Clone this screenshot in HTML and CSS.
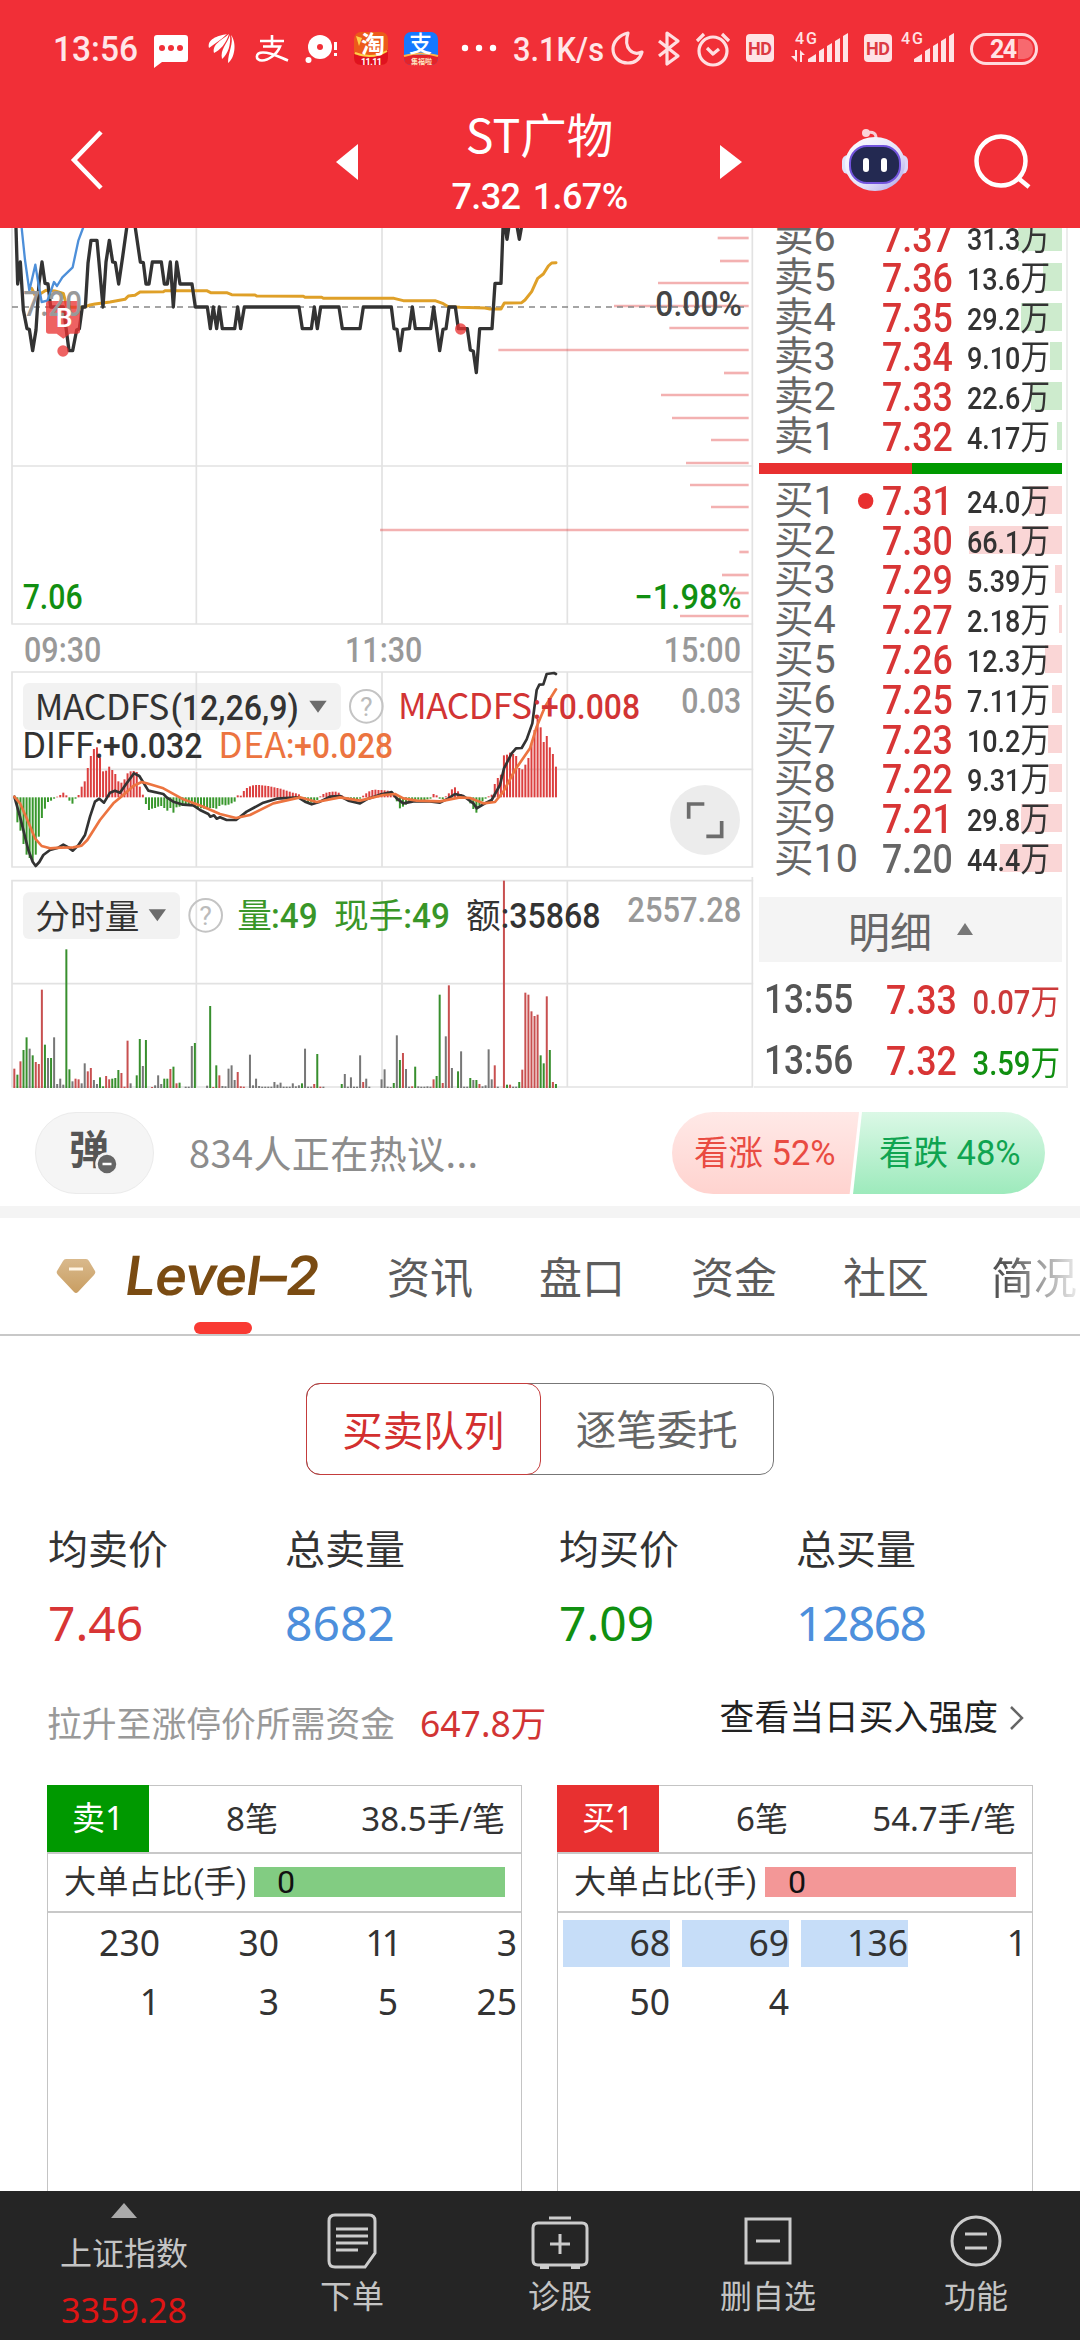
FILE: index.html
```html
<!DOCTYPE html>
<html lang="zh-CN">
<head>
  <meta charset="UTF-8">
  <meta name="viewport" content="width=device-width, initial-scale=1.0">
  <title>ST广物</title>
  <link rel="stylesheet" href="styles.css">
</head>
<body>
  <header class="header">
    <div class="status">
      <svg viewBox="0 0 1080 96" width="1080" height="96">
        <g fill="#ffe6e8" class="status-text">
          <text x="53" y="61" font-size="35" textLength="85" lengthAdjust="spacingAndGlyphs">13:56</text>
          <text x="513" y="61" font-size="34" textLength="91" lengthAdjust="spacingAndGlyphs">3.1K/s</text>
        </g>
        <path d="M157 35h28q3 0 3 3v21q0 3-3 3h-23l-8 6V38q0-3 3-3z" fill="#fff"/>
        <g fill="#f12f37"><circle cx="162" cy="48" r="3"/><circle cx="171" cy="48" r="3"/><circle cx="180" cy="48" r="3"/></g>
        <g fill="#fff">
          <path d="M227 34c-10 2-20 5-18 14 5-4 12-8 18-14z"/>
          <path d="M229 34c-7 6-17 10-15 19 6-3 12-9 15-19z"/>
          <path d="M230 35c-3 9-10 14-8 24 6-5 9-14 8-24z"/>
          <path d="M231 35c3 8-3 17-3 28 7-5 9-20 3-28z"/>
          <circle cx="320" cy="47" r="12"/><circle cx="308.500" cy="60" r="3"/>
          <path d="M334 42h3v8h-3zM334 53h3v3h-3z"/>
          <circle cx="465" cy="48" r="3.200"/><circle cx="479" cy="48" r="3.200"/><circle cx="493" cy="48" r="3.200"/>
        </g>
        <circle cx="320" cy="47" r="3" fill="#f12f37"/>
        <path d="M260 41h24M272 35v11M263 46.500h17c-3 8-12 14-18 14-7 0-7-8 1-8 9 0 17 5 25 8" fill="none" stroke="#fff" stroke-width="2.600"/>
        <rect x="354" y="32" width="34" height="33" rx="7" fill="#ec5a1a"/>
        <path d="M354 54q18 8 34-4v8q0 7-7 7h-20q-7 0-7-7z" fill="#e0121f"/>
        <path d="M355 53q17 7 32-2" stroke="#ffd04a" stroke-width="2" fill="none"/>
        <path d="M356 36l6 2-3 8z" fill="#ffd04a"/>
        <text x="361" y="53" font-size="24" font-weight="700" fill="#fff" class="cn">淘</text>
        <text x="361" y="65" font-size="9" font-weight="700" fill="#fff" textLength="21">11.11</text>
        <rect x="404" y="32" width="34" height="33" rx="7" fill="#1678ff"/>
        <path d="M404 55h34v3q0 7-7 7h-20q-7 0-7-7z" fill="#e3232a"/>
        <path d="M404 56q17-5 34 0" stroke="#ffb347" stroke-width="2" fill="none"/>
        <text x="409" y="52" font-size="23" font-weight="500" fill="#fff" class="cn">支</text>
        <text x="411" y="64" font-size="7" font-weight="700" fill="#ffe3c0" class="cn">集福啦</text>
        <g fill="none" stroke="#ffdfe1" stroke-width="3.200" stroke-linejoin="round">
          <path d="M628 33c-9 2-15 9-15 16 0 8 6 14 15 14 7 0 12-4 14-11-9 4-19-3-14-19z"/>
          <path d="M659 41l19 15-11 8V33l11 8-19 15"/>
          <circle cx="713" cy="51" r="14"/><path d="M707 48l6 6 6-5M697 41l7-7M729 41l-7-7"/>
        </g>
        <g fill="#ffe3e5">
          <rect x="746" y="34" width="28" height="28" rx="4"/>
          <rect x="864" y="34" width="28" height="28" rx="4"/>
          <path d="M808 62v-3l8-5v8zM819 51l5-3v14h-5zM827 46l5-3v19h-5zM835 41l5-3v24h-5zM843 36l5-3v29h-5z"/>
          <path d="M914 62v-3l8-5v8zM925 51l5-3v14h-5zM933 46l5-3v19h-5zM941 41l5-3v24h-5zM949 36l5-3v29h-5z"/>
          <path d="M795 50h2v12l-6-6h4zM800 62V50l5 5h-3v7z"/>
        </g>
        <g fill="#dc3a42" font-weight="700" font-size="18">
          <text x="748" y="55" textLength="24">HD</text><text x="866" y="55" textLength="24">HD</text>
        </g>
        <g fill="#ffe3e5" class="status-text" font-size="16">
          <text x="795" y="43.500" textLength="22">4G</text><text x="901" y="43.500" textLength="22">4G</text>
        </g>
        <rect x="971.500" y="34.500" width="65" height="29" rx="14.500" fill="none" stroke="#ffd9dc" stroke-width="3"/>
        <path d="M1018 39h6q9 1 9 10t-9 10h-6z" fill="#f7696f"/>
        <text x="990" y="58" font-size="25" font-weight="700" fill="#ffe3e5" textLength="27">24</text>
      </svg>
    </div>
    <div class="nav">
      <svg class="nav-back" viewBox="0 0 34 62" width="34" height="62"><path d="M31 3L4 31l27 28" fill="none" stroke="#fff" stroke-width="4.500"/></svg>
      <svg class="nav-prev" viewBox="0 0 22 36" width="22" height="36"><path d="M22 0v36L0 18z" fill="#fff"/></svg>
      <div class="nav-title">
        <div class="stock-name">ST广物</div>
        <div class="stock-price">7.32 1.67%</div>
      </div>
      <svg class="nav-next" viewBox="0 0 22 34" width="22" height="34"><path d="M0 0v34l22-17z" fill="#fff"/></svg>
      <svg class="nav-robot" viewBox="0 0 66 64" width="66" height="64">
        <defs>
          <linearGradient id="shell" x1="0" y1="0" x2="1" y2="1"><stop offset="0" stop-color="#fff"/><stop offset=".6" stop-color="#e4e2f8"/><stop offset="1" stop-color="#a9a0e8"/></linearGradient>
        </defs>
        <path d="M24 6q11-3 10 7" fill="none" stroke="#f7cfd8" stroke-width="3"/><circle cx="24" cy="6" r="4" fill="#fbd5da"/>
        <rect x="0" y="28" width="12" height="19" rx="6" fill="#dfe4fb"/><rect x="54" y="28" width="12" height="19" rx="6" fill="#dcd6f8"/>
        <ellipse cx="33" cy="37" rx="30" ry="27" fill="url(#shell)"/>
        <rect x="8" y="19" width="50" height="37" rx="17" fill="#232951" stroke="#7254dc" stroke-width="2"/>
        <rect x="21" y="31" width="6" height="14" rx="3" fill="#fff"/><rect x="39" y="31" width="6" height="14" rx="3" fill="#fff"/>
      </svg>
      <svg class="nav-search" viewBox="0 0 58 58" width="58" height="58"><circle cx="28" cy="28" r="24.500" fill="none" stroke="#fff" stroke-width="4.500"/><path d="M45 45l11 9" stroke="#fff" stroke-width="4.500"/></svg>
    </div>
  </header>

  <section class="quote">
    <div class="charts">
      <!-- price line, viewBox is in 1/3 px units -->
      <svg class="price-chart" viewBox="0 24 2262 1317">
        <g class="grid">
          <path d="M36 24v1189M34 738h2226M34 1212h2226M589 24v1189M1146 24v1189M1702 24v1189M2257 24v1317"/>
        </g>
        <g id="levels" class="levels"></g>
        <path class="base" d="M36 261H2246"/>
        <polyline class="avg" points="95,205 105,225 120,222 138,211 165,213 190,220 200,258 215,262 250,262 270,255 285,252 330,246 375,238 385,228 405,226 420,216 490,215 495,212 620,212 632,218 680,218 695,224 765,225 770,228 910,229 915,232 965,232 970,235 1182,235 1210,242 1305,242 1330,251 1345,260 1380,262 1455,264 1470,267 1503,267 1513,249 1565,248 1575,240 1595,215 1613,175 1630,162 1645,138 1655,129 1668,128"/>
        <g class="price">
          <polyline points="48,24 53,192 61,126 70,270 81,326 88,328 98,392 108,330 117,190 126,126 135,190 144,192 152,261 190,261 207,392 218,392 230,330 238,326 247,261 256,261 264,130 273,61 291,61 309,261 318,126 328,61 338,126 346,128 356,192 368,110 380,24"/>
          <polyline points="406,24 421,126 430,128 438,192 447,192 457,126 484,126 493,192 502,192 511,126 520,261 530,126 540,192 576,192 586,261 622,261 631,326 640,261 650,326 658,261 667,326 704,326 713,261 722,326 733,261 897,261 907,326 934,326 943,261 952,326 962,261 1017,261 1027,326 1080,326 1090,261 1174,261 1182,326 1191,328 1200,392 1209,328 1228,326 1237,261 1246,326 1292,326 1301,261 1310,326 1319,392 1329,328 1338,326 1347,261 1366,261 1375,326 1402,326 1411,390 1420,394 1429,458 1439,326 1476,326 1485,190 1503,190 1509,24 1516,24 1521,58 1526,24"/>
          <polyline points="1552,24 1558,58 1564,24"/>
        </g>
        <polyline class="index" points="65,24 75,120 88,212 106,134 115,190 125,246 142,242 152,215 162,186 171,198 187,172 218,142 235,62 249,24"/>
        <path class="mark" d="M146 243h86q8 0 8 8v82q0 8-8 8h-22l-20 15-20-15h-24q-8 0-8-8v-82q0-8 8-8z"/>
        <circle class="mark" cx="189" cy="393" r="17"/><circle class="mark" cx="1382" cy="327" r="17"/>
        <g class="num" font-size="104">
          <text x="70" y="288" fill="#999" textLength="176" lengthAdjust="spacingAndGlyphs">7.20</text>
          <text x="1966" y="288" fill="#444" textLength="260" lengthAdjust="spacingAndGlyphs">0.00%</text>
          <text x="68" y="1167" fill="#118f11" textLength="180" lengthAdjust="spacingAndGlyphs">7.06</text>
          <text x="1903" y="1167" fill="#118f11" textLength="322" lengthAdjust="spacingAndGlyphs">−1.98%</text>
          <g fill="#999">
            <text x="72" y="1325" textLength="232" lengthAdjust="spacingAndGlyphs">09:30</text>
            <text x="1035" y="1325" textLength="232" lengthAdjust="spacingAndGlyphs">11:30</text>
            <text x="1991" y="1325" textLength="232" lengthAdjust="spacingAndGlyphs">15:00</text>
          </g>
        </g>
        <text x="167" y="320" font-size="80" fill="#fff" font-weight="500">B</text>
      </svg>

      <svg class="macd-chart" viewBox="0 21 2262 630">
        <rect class="chip" x="69" y="69" width="954" height="141" rx="18"/>
        <g class="grid">
          <path d="M36 34v588M34 36h2226M34 328h2226M34 621h2226M589 34v588M1146 34v588M1702 34v588M2257 21v601"/>
        </g>
        <g id="macdBars"></g>
        <polyline class="diff" points="43,410 60,470 85,570 98,605 107,618 118,606 130,585 150,570 175,563 190,554 205,562 218,572 235,556 255,525 270,470 285,425 298,416 312,428 330,398 345,392 360,398 380,370 402,340 418,348 445,392 490,402 500,412 520,425 550,434 580,436 600,450 625,462 631,470 642,466 650,476 660,472 680,480 708,480 740,455 790,428 830,416 895,412 915,425 935,433 960,425 990,410 1020,408 1045,422 1080,430 1100,418 1140,404 1175,396 1190,415 1210,430 1240,424 1290,424 1320,428 1345,415 1365,402 1390,408 1420,430 1430,445 1460,427 1475,420 1500,375 1512,325 1535,280 1548,265 1565,264 1580,238 1597,190 1610,90 1618,74 1630,73 1640,42 1662,39 1668,42"/>
        <polyline class="dea" points="43,410 60,430 80,475 105,535 125,558 150,565 180,563 220,562 245,557 262,540 300,480 340,430 370,405 400,378 425,366 440,370 490,385 550,418 610,440 660,462 708,474 750,465 820,430 900,412 950,426 1020,412 1080,422 1150,405 1185,402 1210,415 1250,422 1320,424 1380,412 1410,414 1450,430 1485,426 1510,395 1545,330 1590,265 1610,200 1635,140 1668,88"/>
        <path class="arrow" d="M928 122h52l-26 36z"/>
        <circle class="help" cx="1099" cy="139" r="49"/><text class="help-mark" x="1099" y="168">?</text>
        <g class="cn" font-size="106">
          <text x="104" y="181" fill="#333" textLength="404">MACDFS</text>
          <text x="1194" y="178" fill="#d23434" textLength="402">MACDFS</text>
          <text x="65" y="293" fill="#333" textLength="218">DIFF</text>
          <text x="655" y="293" fill="#ec7440" textLength="203">DEA</text>
        </g>
        <g class="num" font-size="104">
          <text x="512" y="179" fill="#333" textLength="384" lengthAdjust="spacingAndGlyphs">(12,26,9)</text>
          <text x="1598" y="178" fill="#d23434" textLength="322" lengthAdjust="spacingAndGlyphs">:+0.008</text>
          <text x="284" y="293" fill="#333" textLength="323" lengthAdjust="spacingAndGlyphs">:+0.032</text>
          <text x="858" y="293" fill="#ec7440" textLength="321" lengthAdjust="spacingAndGlyphs">:+0.028</text>
          <text x="2044" y="158" fill="#999" textLength="180" lengthAdjust="spacingAndGlyphs">0.03</text>
        </g>
        <circle cx="2115" cy="480" r="105" fill="#ececec"/>
        <path d="M2066 476v-44h47M2119 529h46v-46" fill="none" stroke="#6c6c6c" stroke-width="11"/>
      </svg>

      <svg class="vol-chart" viewBox="0 651 2262 636">
        <rect class="chip" x="69" y="697" width="471" height="140" rx="18"/>
        <g class="grid">
          <path d="M36 660v622M34 662h2226M34 971h2226M34 1281h2226M589 660v622M1146 660v622M1702 660v622M2257 651v631"/>
        </g>
        <g id="volBars"></g>
        <path class="arrow" d="M446 748h52l-26 36z"/>
        <circle class="help" cx="617" cy="766" r="49"/><text class="help-mark" x="617" y="795">?</text>
        <g class="cn" font-size="104">
          <text x="106" y="806" fill="#333">分时量</text>
          <text x="712" y="804" fill="#399628">量</text>
          <text x="1002" y="804" fill="#399628">现手</text>
          <text x="1398" y="804" fill="#333">额</text>
        </g>
        <g class="num" font-size="104">
          <text x="813" y="803" fill="#399628" textLength="140" lengthAdjust="spacingAndGlyphs">:49</text>
          <text x="1210" y="803" fill="#399628" textLength="140" lengthAdjust="spacingAndGlyphs">:49</text>
          <text x="1502" y="803" fill="#333" textLength="300" lengthAdjust="spacingAndGlyphs">:35868</text>
          <text x="1882" y="786" fill="#999" textLength="342" lengthAdjust="spacingAndGlyphs">2557.28</text>
        </g>
      </svg>
    </div>

    <aside class="book">
      <div class="book-rows sell" id="sellRows"></div>
      <div class="ratio"><span class="ratio-buy"></span><span class="ratio-sell"></span></div>
      <div class="book-rows buy" id="buyRows"></div>
      <div class="detail-title">明细<svg viewBox="0 0 16 12" width="16" height="12"><path d="M8 0l8 12H0z" fill="#777"/></svg></div>
      <div class="trade"><span class="t-time">13:55</span><span class="t-price">7.33</span><span class="t-vol">0.07<i>万</i></span></div>
      <div class="trade"><span class="t-time">13:56</span><span class="t-price">7.32</span><span class="t-vol down">3.59<i>万</i></span></div>
    </aside>
  </section>

  <section class="discuss">
    <div class="danmu">弹<svg viewBox="0 0 24 24" width="24" height="24"><circle cx="12" cy="12" r="10.500" fill="#666" stroke="#f4f4f4" stroke-width="2.500"/><path d="M7.500 12h9" stroke="#fff" stroke-width="2.500"/></svg></div>
    <div class="talking">834人正在热议...</div>
    <div class="vote">
      <div class="vote-up">看涨 52%</div>
      <div class="vote-down">看跌 48%</div>
    </div>
  </section>

  <nav class="tabs">
    <svg class="gem" viewBox="0 0 40 36" width="40" height="36">
      <defs><linearGradient id="gold" x1="0" y1="0" x2="0" y2="1"><stop offset="0" stop-color="#d9b98c"/><stop offset="1" stop-color="#c99e62"/></linearGradient></defs>
      <path d="M10 1h20q2 0 3 2l6 10q1 2-1 4L22 34q-2 2-4 0L2 17q-2-2-1-4L7 3q1-2 3-2z" fill="url(#gold)"/><path d="M13 11h14" stroke="#fff5e4" stroke-width="3"/>
    </svg>
    <div class="tab-level"><span>Level–2</span></div>
    <div class="tab">资讯</div>
    <div class="tab">盘口</div>
    <div class="tab">资金</div>
    <div class="tab">社区</div>
    <div class="tab last">简况</div>
  </nav>

  <main class="level2">
    <div class="segment">
      <div class="seg active">买卖队列</div>
      <div class="seg">逐笔委托</div>
    </div>

    <div class="stats">
      <div><div class="label">均卖价</div><div class="value red">7.46</div></div>
      <div><div class="label">总卖量</div><div class="value blue">8682</div></div>
      <div><div class="label">均买价</div><div class="value green">7.09</div></div>
      <div><div class="label">总买量</div><div class="value blue long">12868</div></div>
    </div>

    <div class="fund">
      <div class="fund-left">拉升至涨停价所需资金<b>647.8万</b></div>
      <div class="fund-more">查看当日买入强度<svg viewBox="0 0 16 26" width="16" height="26"><path d="M2 2l11 11L2 24" fill="none" stroke="#666" stroke-width="2.500"/></svg></div>
    </div>

    <div class="queues">
      <div class="queue">
        <div class="queue-head"><span class="tag tag-sell">卖1</span><span class="count">8笔</span><span class="per">38.5手/笔</span></div>
        <div class="queue-big">大单占比(手)<span class="big-bar bar-sell">0</span></div>
        <div class="queue-grid">
          <span>230</span><span>30</span><span class="ones">11</span><span>3</span>
          <span>1</span><span>3</span><span>5</span><span>25</span>
        </div>
      </div>
      <div class="queue">
        <div class="queue-head"><span class="tag tag-buy">买1</span><span class="count">6笔</span><span class="per">54.7手/笔</span></div>
        <div class="queue-big">大单占比(手)<span class="big-bar bar-buy">0</span></div>
        <div class="queue-grid">
          <span class="hl">68</span><span class="hl">69</span><span class="hl">136</span><span>1</span>
          <span>50</span><span>4</span>
        </div>
      </div>
    </div>
  </main>

  <footer class="toolbar">
    <div class="index-item">
      <svg viewBox="0 0 26 15" width="26" height="15"><path d="M13 0l13 15H0z" fill="#aaa"/></svg>
      <div class="index-name">上证指数</div>
      <div class="index-value">3359.28</div>
    </div>
    <div class="tool">
      <svg viewBox="0 0 60 60" width="60" height="60"><path d="M13 5h34q6 0 6 6v32L43 57H13q-6 0-6-6V11q0-6 6-6zM14 19h32M14 26h32M14 33h32M14 40h22"/></svg>
      <div>下单</div>
    </div>
    <div class="tool">
      <svg viewBox="0 0 60 60" width="60" height="60"><path d="M19 8h22M8 13h44q5 0 5 5v32q0 5-5 5H8q-5 0-5-5V18q0-5 5-5zM20 34h20M30 24v20M10 57.500h9M41 57.500h9"/></svg>
      <div>诊股</div>
    </div>
    <div class="tool">
      <svg viewBox="0 0 60 60" width="60" height="60"><path d="M8 9h44v44H8zM18 31h24"/></svg>
      <div>删自选</div>
    </div>
    <div class="tool">
      <svg viewBox="0 0 60 60" width="60" height="60"><path d="M19 24h22M19 38h22"/><circle cx="30" cy="31" r="24"/></svg>
      <div>功能</div>
    </div>
  </footer>
  <script src="app.js"></script>
</body>
</html>
```
FILE: styles.css
```css
* {
  margin: 0;
  padding: 0;
  box-sizing: border-box;
}

body {
  width: 1080px;
  height: 2340px;
  overflow: hidden;
  display: flex;
  flex-direction: column;
  background-color: #fff;
  color: #333;
  font-family: Roboto, "Noto Sans CJK SC", sans-serif;
}

svg {
  display: block;
  flex-shrink: 0;
  overflow: visible;
}

svg text {
  font-family: Roboto, "Noto Sans CJK SC", sans-serif;
}

svg .cn,
svg .cn text {
  font-family: "Noto Sans CJK SC", sans-serif;
}

.status-text,
.num {
  font-weight: 500;
}

/* header */
.header {
  height: 228px;
  background-color: #f12f37;
  color: #fff;
}

.status {
  height: 96px;
}

.nav {
  display: flex;
  align-items: flex-start;
  height: 132px;
}

.nav-back {
  margin: 33px 0 0 70px;
}

.nav-prev {
  margin: 48px 0 0 232px;
}

.nav-title {
  width: 362px;
  padding-left: 1px;
  text-align: center;
}

.stock-name {
  margin-top: 9px;
  font-size: 46.5px;
  line-height: 56px;
  font-family: "Noto Sans CJK SC", sans-serif;
}

.stock-price {
  margin-top: 16px;
  font-size: 36px;
  line-height: 40px;
  font-weight: 500;
  letter-spacing: -0.6px;
  word-spacing: 4px;
}

.nav-next {
  margin-top: 49px;
}

.nav-robot {
  margin: 31px 0 0 100px;
}

.nav-search {
  margin: 37px 0 0 65px;
}

/* charts and order book */
.quote {
  display: flex;
  height: 860px;
  overflow: hidden;
}

.charts {
  width: 754px;
}

.price-chart {
  width: 754px;
  height: 439px;
}

.macd-chart {
  width: 754px;
  height: 210px;
}

.vol-chart {
  width: 754px;
  height: 212px;
}

.grid {
  fill: none;
  stroke: #e2e2e2;
  stroke-width: 5;
}

.levels {
  stroke: #e23b3b;
  stroke-opacity: 0.4;
  stroke-width: 8;
}

.base {
  stroke: #888;
  stroke-width: 4;
  stroke-dasharray: 18 15;
}

.price,
.avg,
.index,
.diff,
.dea {
  fill: none;
  stroke: #333;
  stroke-width: 10;
  stroke-linejoin: round;
  stroke-linecap: round;
}

.avg {
  stroke: #dfa028;
  stroke-width: 9;
}

.index {
  stroke: #4d8fd9;
  stroke-width: 7;
}

.diff {
  stroke-width: 8;
}

.dea {
  stroke: #ec7440;
  stroke-width: 8;
}

.mark {
  fill: #e83030;
  fill-opacity: 0.76;
}

.chip {
  fill: #f2f2f2;
}

.arrow {
  fill: #6c6c6c;
}

.help {
  fill: none;
  stroke: #c4c4c4;
  stroke-width: 6;
}

.help-mark {
  fill: #bbb;
  font-size: 80px;
  text-anchor: middle;
}

.vr { fill: #c85050; }
.vg { fill: #388f2e; }
.vk { fill: #777; }
.mr { fill: #dc3f3f; }
.mg { fill: #38972c; }

.book {
  width: 314px;
  height: 860px;
  border-right: 2px solid #ececec;
  border-bottom: 2px solid #ececec;
  padding: 0 4px 0 5px;
}

.sell {
  margin-top: -11px;
}

.book-row {
  position: relative;
  display: flex;
  height: 39.8px;
  line-height: 41.8px;
  padding-left: 15px;
}

.depth {
  position: absolute;
  right: 0;
  top: 6px;
  height: 28px;
}

.sell .depth { background-color: #cdebcd; }
.buy .depth { background-color: #fad6d6; }

.book-row span {
  position: relative;
}

.name {
  flex: none;
  width: 108px;
  font-size: 39.5px;
  color: #666;
  white-space: nowrap;
}

.name em {
  font-style: normal;
}

.cost,
.t-price {
  flex: none;
  width: 70px;
  font-size: 41.5px;
  font-weight: 500;
  color: #d83535;
  transform: scaleX(0.86);
  transform-origin: left;
}

.cost.flat {
  color: #666;
}

.amount,
.t-vol {
  flex: 1;
  text-align: right;
  font-size: 31px;
  font-weight: 500;
  white-space: nowrap;
  transform: scaleX(0.87);
  transform-origin: right;
}

.amount {
  top: 1px;
  margin-right: 12px;
}

.amount i,
.t-vol i {
  font-style: normal;
  font-weight: 400;
  font-size: 34px;
}

.hot::before {
  content: "";
  position: absolute;
  left: -28px;
  top: 13px;
  width: 18px;
  height: 16px;
  border-radius: 50%;
  background-color: #e83030;
}

.ratio {
  display: flex;
  height: 11px;
  margin: 7px 0 6px;
}

.ratio-buy {
  width: 153px;
  background-color: #e83030;
}

.ratio-sell {
  flex: 1;
  background-color: #009900;
}

.detail-title {
  display: flex;
  align-items: center;
  justify-content: center;
  gap: 25px;
  height: 65px;
  margin: 19px 0 7px;
  background-color: #f4f4f4;
  color: #666;
  font-size: 42px;
}

.trade {
  display: flex;
  height: 61px;
  line-height: 62px;
  padding-left: 5px;
}

.t-time {
  flex: none;
  width: 122px;
  font-size: 40px;
  font-weight: 500;
  color: #555;
  transform: scaleX(0.88);
  transform-origin: left;
}

.t-vol {
  color: #cc3a3a;
  margin-right: 2px;
  font-size: 33.5px;
  line-height: 66px;
}

.t-vol.down {
  color: #118f11;
}

/* discussion bar */
.discuss {
  display: flex;
  align-items: center;
  height: 130px;
  padding: 0 35px;
  border-bottom: 12px solid #f4f4f4;
}

.danmu {
  position: relative;
  width: 119px;
  height: 82px;
  margin-top: 12px;
  padding-left: 33px;
  line-height: 76px;
  border: 1px solid #ebebeb;
  border-radius: 41px;
  background-color: #f5f5f5;
  color: #555;
  font-size: 40px;
  font-weight: 700;
}

.danmu svg {
  position: absolute;
  left: 59px;
  top: 39px;
}

.talking {
  margin: 8px 0 0 35px;
  color: #8c8c8c;
  font-size: 38px;
  letter-spacing: 0.4px;
  font-family: "Noto Sans CJK SC", sans-serif;
}

.vote {
  display: flex;
  width: 373px;
  height: 82px;
  margin: 12px 0 0 auto;
  border-radius: 41px;
  overflow: hidden;
  line-height: 83px;
  font-size: 34.5px;
}

.vote-up {
  width: 190px;
  padding-left: 22px;
  background: linear-gradient(#ffe9e7, #ffd3cf);
  clip-path: polygon(0 0, 100% 0, 95% 100%, 0 100%);
  color: #e94b42;
}

.vote-down {
  width: 195px;
  margin-left: -6px;
  padding-left: 26px;
  background: linear-gradient(#dbf8e6, #9deabc);
  clip-path: polygon(9px 0, 100% 0, 100% 100%, 0 100%);
  color: #10a451;
}

/* tabs */
.tabs {
  position: relative;
  display: flex;
  align-items: center;
  height: 118px;
  border-bottom: 2px solid #c8c8c8;
  overflow: hidden;
}

.gem {
  margin: 0 0 0 56px;
}

.tab-level {
  position: relative;
  flex-shrink: 0;
  width: 261px;
  height: 116px;
  margin-left: 30px;
  line-height: 116px;
  color: #7a4b12;
}

.tab-level span {
  display: inline-block;
  font-family: Inter, sans-serif;
  font-size: 54px;
  font-weight: 600;
  letter-spacing: -0.8px;
  transform: skewX(-8deg);
}

.tab-level::after {
  content: "";
  position: absolute;
  left: 68px;
  bottom: 0;
  width: 58px;
  height: 12px;
  border-radius: 6px;
  background-color: #f93a33;
}

.tab {
  flex-shrink: 0;
  width: 152px;
  font-size: 43px;
  line-height: 116px;
  padding-top: 5px;
  color: #5c5c5c;
}

.last {
  margin-left: -4px;
  background: linear-gradient(90deg, #555 15px, #eee 88px);
  background-clip: text;
  -webkit-background-clip: text;
  color: transparent;
}

/* level 2 content */
.level2 {
  height: 855px;
  padding: 47px 47px 0;
  overflow: hidden;
}

.segment {
  display: flex;
  width: 468px;
  height: 92px;
  margin: 0 auto;
  border: 1px solid #777;
  border-radius: 14px;
}

.seg {
  flex: 1;
  text-align: center;
  line-height: 94px;
  font-size: 40.5px;
  color: #666;
}

.seg.active {
  margin: -1px 0 -1px -1px;
  line-height: 96px;
  border: 1px solid #c43c3c;
  border-radius: 14px;
  color: #d32f2f;
}

.stats {
  display: grid;
  grid-template-columns: 237px 274px 237px 1fr;
  margin: 48px 0 0 1px;
}

.label {
  font-size: 40px;
  line-height: 56px;
}

.value {
  margin-top: 16px;
  font-family: "Noto Sans", sans-serif;
  font-size: 48px;
  line-height: 56px;
}

.long {
  letter-spacing: -1.6px;
}

.red { color: #d83535; }
.green { color: #109010; }
.blue { color: #4d8fdc; }

.fund {
  display: flex;
  justify-content: space-between;
  height: 50px;
  margin-top: 47px;
  line-height: 50px;
  font-size: 34.8px;
}

.fund-left {
  color: #999;
}

.fund-left b {
  margin-left: 25px;
  font-family: "Noto Sans", "Noto Sans CJK SC", sans-serif;
  font-weight: 400;
  font-size: 35.5px;
  color: #d23434;
}

.fund-more {
  display: flex;
  align-items: center;
  gap: 11px;
  height: 40px;
  padding-right: 8px;
  color: #222;
}

.queues {
  display: grid;
  grid-template-columns: 475px 476px;
  justify-content: space-between;
  margin-top: 37px;
}

.queue {
  height: 430px;
  border: 1px solid #c4c4c4;
}

.queue-head {
  display: flex;
  height: 68px;
  line-height: 66px;
  border-bottom: 2px solid #c8c8c8;
  font-family: "Noto Sans", "Noto Sans CJK SC", sans-serif;
  font-size: 33px;
}

.tag {
  width: 102px;
  margin: -1px 0 0 -1px;
  text-align: center;
  color: #fff;
}

.tag-sell { background-color: #009900; }
.tag-buy { background-color: #e83030; }

.count {
  width: 129px;
  text-align: right;
}

.per {
  flex: 1;
  padding-right: 16px;
  text-align: right;
}

.queue-big {
  display: flex;
  align-items: center;
  height: 59px;
  padding: 0 16px 2px;
  border-bottom: 2px solid #c8c8c8;
  font-size: 32.2px;
  line-height: 30px;
  white-space: nowrap;
}

.big-bar {
  width: 251px;
  height: 30px;
  margin-left: auto;
  padding-left: 23px;
  line-height: 30px;
  color: #111;
}

.bar-sell { background-color: #82cc82; }
.bar-buy { background-color: #f39797; }

.queue-grid {
  display: grid;
  grid-template-columns: repeat(4, 107px);
  column-gap: 12px;
  row-gap: 12px;
  padding: 7px 0 0 5px;
}

.queue-grid span {
  height: 47px;
  line-height: 44px;
  text-align: right;
  font-family: "Noto Sans", sans-serif;
  font-size: 35.5px;
}

.queue-grid .ones {
  letter-spacing: -4px;
}

.hl {
  background-color: #c6ddf8;
}

/* bottom toolbar */
.toolbar {
  display: flex;
  height: 149px;
  background-color: #252525;
  color: #c4c4c4;
  font-size: 32px;
  text-align: center;
}

.index-item {
  width: 248px;
  padding-top: 12px;
}

.index-item svg {
  margin: 0 auto;
}

.index-name {
  margin-top: 16px;
  line-height: 40px;
}

.index-value {
  margin-top: 16px;
  font-family: "Noto Sans", sans-serif;
  font-size: 34px;
  line-height: 40px;
  color: #e01414;
}

.tool {
  width: 208px;
  padding-top: 19px;
  line-height: 48px;
}

.tool svg {
  margin: 0 auto 3px;
  fill: none;
  stroke: #ccc;
  stroke-width: 3;
}
```
FILE: app.js
```js
const NS = 'http://www.w3.org/2000/svg';
const STEP = 9.18;

function bar(parent, x, y, w, h, cls) {
  const r = document.createElementNS(NS, 'rect');
  r.setAttribute('x', x);
  r.setAttribute('y', y);
  r.setAttribute('width', w);
  r.setAttribute('height', h);
  r.setAttribute('class', cls);
  parent.appendChild(r);
}

// volume at price: [y, left]
const levels = [
  [54, 2153], [123, 2160], [189, 1974], [258, 1842], [324, 2008], [390, 1495],
  [459, 2172], [525, 1983], [594, 2016], [660, 2133], [729, 2058], [795, 2070],
  [861, 2133], [930, 1140], [996, 2218], [1065, 2166], [1119, 2177], [1188, 2040]
];
document.getElementById('levels').innerHTML =
  levels.map(([y, x]) => `<path d="M${x} ${y}H2246"/>`).join('');

const macd = [
  0, -75, -100, -140, -172, -182, -190, -172, -118, -62, -34, -14, -10, -4, 2, 7, 14, 6, -10, -19,
  -4, 7, 32, 48, 88, 124, 145, 150, 120, 78, 80, 92, 82, 70, 48, 44, 54, 72, 78, 79,
  76, 32, 8, -20, -38, -34, -32, -28, -26, -32, -40, -32, -46, -30, -28, -26, -24, -24, -26, -28,
  -32, -33, -34, -34, -32, -32, -34, -26, -22, -24, -22, -18, -13, 6, 5, 19, 28, 33, 36, 37,
  37, 36, 35, 34, 32, 30, 28, 26, 23, 20, 17, 14, 12, 9, -4, -10, -14, -16, -14, -8,
  3, 10, 14, 16, 17, 17, 14, 6, -2, -6, -8, -8, -8, -4, 5, 12, 18, 22, 23, 22,
  22, 21, 20, 14, 6, -12, -33, -28, -22, -12, -8, -7, -7, -8, -8, -6, -4, 10, 6, -4,
  -5, 3, 12, 24, 30, 18, 10, 4, -3, -18, -35, -46, -25, -12, -4, 3, 8, 40, 58, 68,
  126, 128, 134, 130, 124, 88, 84, 98, 118, 160, 202, 236, 210, 166, 184, 150, 130, 92
];
const macdBars = document.getElementById('macdBars');
macd.forEach((v, i) => {
  const x = 40 + i * STEP;
  bar(macdBars, x, v > 0 ? 412 - v : 412, 6, Math.abs(v), v > 0 ? 'mr' : 'mg');
});

const volume = `r58 g40 r80 g114 g152 k118 g98 r78 r72 r295 g130 k90 g90 k152 k12 k28 k10 g416 g56 k20
r28 r26 k14 k74 r50 r60 k24 k12 g32 g5 r36 r26 g28 g30 g54 r45 r4 r142 k14 k0
g38 g147 k66 g144 k0 r3 k8 k38 k12 g28 g28 r57 g64 r14 g16 k0 k4 k4 k126 g135
k0 k0 k0 k7 g246 r3 g68 r38 k6 k5 k58 k68 k24 r48 r5 r4 k0 k100 k8 k28
k6 k4 k4 k4 k4 k18 k10 k16 k4 k4 k4 k14 k5 k8 g14 k118 k4 k4 r12 g102
r4 k4 k0 k0 k0 k0 k0 g12 k42 k4 k32 k4 k4 k98 r18 k28 k4 k0 k0 k0
k26 k56 k4 k3 g15 k158 g84 r105 k57 k4 r5 g64 k5 k4 k4 k5 k4 r26 g36 g280
r15 k155 r308 k60 k0 g50 k110 k4 k4 g30 k24 g24 r12 k5 k8 k116 k26 r68 k4 k0
r622 g10 r10 k4 k4 g18 r55 r286 r280 r230 r216 r220 g98 g74 r275 g114 r18 g12`.split(/\s+/);
const volBars = document.getElementById('volBars');
volume.forEach((v, i) => {
  const h = Number(v.slice(1));
  bar(volBars, 40 + i * STEP, 1284 - h, 6, h, 'v' + v[0]);
});

// [price, amount, depth bar width]
const sell = [
  ['7.37', '31.3', 44], ['7.36', '13.6', 19], ['7.35', '29.2', 41],
  ['7.34', '9.10', 12], ['7.33', '22.6', 31], ['7.32', '4.17', 5]
];
const buy = [
  ['7.31', '24.0', 33], ['7.30', '66.1', 93], ['7.29', '5.39', 7], ['7.27', '2.18', 3],
  ['7.26', '12.3', 17], ['7.25', '7.11', 10], ['7.23', '10.2', 14], ['7.22', '9.31', 13],
  ['7.21', '29.8', 41], ['7.20', '44.4', 62]
];

function row(side, n, [price, amount, width]) {
  const extra = (side === '买' && n === 1 ? ' hot' : '') + (price === '7.20' ? ' flat' : '');
  return `<div class="book-row">
    <div class="depth" style="width:${width}px"></div>
    <span class="name">${side}<em>${n}</em></span>
    <span class="cost${extra}">${price}</span>
    <span class="amount">${amount}<i>万</i></span>
  </div>`;
}

document.getElementById('sellRows').innerHTML = sell.map((r, i) => row('卖', 6 - i, r)).join('');
document.getElementById('buyRows').innerHTML = buy.map((r, i) => row('买', i + 1, r)).join('');
```
